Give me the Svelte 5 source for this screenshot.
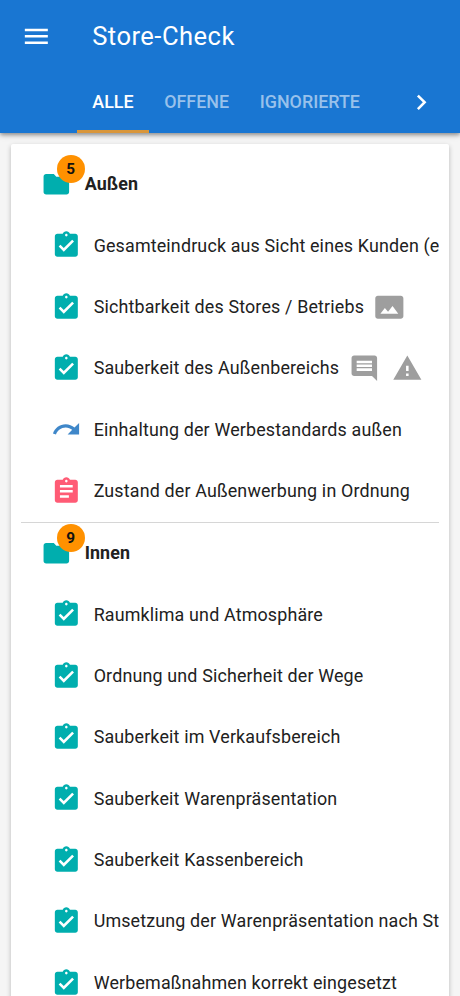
<script>
    const icons = {
        check: "M19 3h-4.18C14.4 1.84 13.3 1 12 1s-2.4.84-2.82 2H5c-1.1 0-2 .9-2 2v14c0 1.1.9 2 2 2h14c1.1 0 2-.9 2-2V5c0-1.1-.9-2-2-2zm-7 0c.55 0 1 .45 1 1s-.45 1-1 1-1-.45-1-1 .45-1 1-1zm-2 14l-4-4 1.41-1.41L10 14.17l6.59-6.59L18 9l-8 8z",
        open: "M19 3h-4.18C14.4 1.84 13.3 1 12 1s-2.4.84-2.82 2H5c-1.1 0-2 .9-2 2v14c0 1.1.9 2 2 2h14c1.1 0 2-.9 2-2V5c0-1.1-.9-2-2-2zm-7 0c.55 0 1 .45 1 1s-.45 1-1 1-1-.45-1-1 .45-1 1-1zm2 14H7v-2h7v2zm3-4H7v-2h10v2zm0-4H7V7h10v2z",
        skipped: "M18.4 10.6C16.55 8.99 14.15 8 11.5 8c-4.65 0-8.58 3.03-9.96 7.22L3.9 16c1.05-3.19 4.05-5.5 7.6-5.5 1.95 0 3.73.72 5.12 1.88L13 16h9V7l-3.6 3.6z",
        folder: "M10 4H4c-1.1 0-2 .9-2 2v12c0 1.1.9 2 2 2h16c1.1 0 2-.9 2-2V8c0-1.1-.9-2-2-2h-8l-2-2z",
        photo: "M21 3H3C2 3 1 4 1 5v14c0 1.1.9 2 2 2h18c1 0 2-1 2-2V5c0-1-1-2-2-2zM5 17l3.5-4.5 2.5 3.01L14.5 11l4.5 6H5z",
        comment: "M21.99 4c0-1.1-.89-2-1.99-2H4c-1.1 0-2 .9-2 2v12c0 1.1.9 2 2 2h14l4 4-.01-18zM18 14H6v-2h12v2zm0-3H6V9h12v2zm0-3H6V6h12v2z",
        warning: "M1 21h22L12 2 1 21zm12-3h-2v-2h2v2zm0-4h-2v-4h2v4z",
        menu: "M3 18h18v-2H3v2zm0-5h18v-2H3v2zm0-7v2h18V6H3z",
        next: "M8.59 16.58L13.17 12 8.59 7.41 10 6l6 6-6 6-1.41-1.42z",
    };

    const tabs = ["Alle", "Offene", "Ignorierte"];
    let active = $state("Alle");

    const groups = [
        {
            title: "Außen",
            count: 5,
            items: [
                { text: "Gesamteindruck aus Sicht eines Kunden (e", status: "check" },
                { text: "Sichtbarkeit des Stores / Betriebs", status: "check", extras: ["photo"] },
                { text: "Sauberkeit des Außenbereichs", status: "check", extras: ["comment", "warning"] },
                { text: "Einhaltung der Werbestandards außen", status: "skipped" },
                { text: "Zustand der Außenwerbung in Ordnung", status: "open" },
            ],
        },
        {
            title: "Innen",
            count: 9,
            items: [
                { text: "Raumklima und Atmosphäre", status: "check" },
                { text: "Ordnung und Sicherheit der Wege", status: "check" },
                { text: "Sauberkeit im Verkaufsbereich", status: "check" },
                { text: "Sauberkeit Warenpräsentation", status: "check" },
                { text: "Sauberkeit Kassenbereich", status: "check" },
                { text: "Umsetzung der Warenpräsentation nach St", status: "check" },
                { text: "Werbemaßnahmen korrekt eingesetzt", status: "check" },
            ],
        },
    ];
</script>

{#snippet icon(name)}
    <svg class="icon {name}" viewBox="0 0 24 24"><path d={icons[name]} /></svg>
{/snippet}

<div class="page">
    <header>
        <div class="toolbar">
            {@render icon("menu")}
            <h1>Store-Check</h1>
        </div>
        <nav>
            {#each tabs as tab}
                <button class:active={tab === active} onclick={() => (active = tab)}>{tab}</button>
            {/each}
            <div class="more">{@render icon("next")}</div>
        </nav>
    </header>

    <main>
        {#each groups as group}
            <section>
                <div class="row group">
                    <div class="folder-wrap">
                        {@render icon("folder")}
                        <span class="badge">{group.count}</span>
                    </div>
                    <h2>{group.title}</h2>
                </div>
                {#each group.items as item}
                    <div class="row item">
                        {@render icon(item.status)}
                        <span class="text">{item.text}</span>
                        {#each item.extras ?? [] as extra}
                            <span class="extra">{@render icon(extra)}</span>
                        {/each}
                    </div>
                {/each}
            </section>
        {/each}
    </main>
</div>

<style>
    :global(body) {
        background: #f5f5f5;
    }

    .page {
        height: 996px;
        overflow: hidden;
        font-family: Roboto, sans-serif;
        color: #212121;
    }

    .icon {
        display: block;
        flex: none;
        width: 30.67px;
        height: 30.67px;
        fill: currentColor;
    }

    header {
        position: relative;
        height: 133px;
        background: #1976d2;
        color: #fff;
        box-shadow: 0 2px 4px rgba(0, 0, 0, 0.35), 0 1px 8px rgba(0, 0, 0, 0.15);
    }

    .toolbar {
        display: flex;
        align-items: center;
        height: 72px;
        padding-left: 20.7px;
    }

    h1 {
        margin: 0 0 0 40.8px;
        font-size: 25.56px;
        font-weight: 400;
        letter-spacing: 0.48px;
    }

    nav {
        display: flex;
        height: 61px;
        padding-left: 77px;
    }

    button {
        padding: 0 15.3px;
        border: 0;
        border-bottom: 3px solid transparent;
        background: none;
        font: 500 17.89px Roboto, sans-serif;
        text-transform: uppercase;
        color: #98c1eb;
    }

    button.active {
        border-color: #d9963a;
        color: #fff;
    }

    .more {
        display: flex;
        align-items: center;
        margin-left: auto;
        padding-right: 23px;
    }

    main {
        margin: 11px 11px 0;
        padding: 9.7px 10px 0;
        background: #fff;
        border-radius: 2px;
        box-shadow: 0 2px 5px rgba(0, 0, 0, 0.25);
    }

    section + section {
        border-top: 1px solid #d6d6d6;
    }

    .row {
        display: flex;
        align-items: center;
        height: 61.35px;
        overflow: hidden;
    }

    .group {
        overflow: visible;
        padding-left: 20.3px;
    }

    .folder-wrap {
        position: relative;
    }

    .folder {
        color: #00aeae;
    }

    .badge {
        position: absolute;
        top: -14px;
        left: 15.3px;
        width: 28px;
        height: 28px;
        border-radius: 50%;
        background: #ff9100;
        color: #111;
        font-size: 15.33px;
        font-weight: 700;
        line-height: 28px;
        text-align: center;
    }

    h2 {
        margin: -1px 0 0 12.7px;
        font-size: 17.89px;
        font-weight: 700;
        letter-spacing: 0.1px;
    }

    .item {
        padding-left: 29.6px;
    }

    .check {
        color: #00aeae;
    }

    .open {
        color: #ff5b75;
    }

    .skipped {
        color: #3f87c9;
    }

    .text {
        margin: -1px 0 0 12.4px;
        font-size: 17.89px;
        letter-spacing: 0.16px;
        white-space: nowrap;
    }

    .extra {
        margin-left: 9.5px;
        color: #9e9e9e;
    }

    .extra + .extra {
        margin-left: 12.5px;
    }
</style>
